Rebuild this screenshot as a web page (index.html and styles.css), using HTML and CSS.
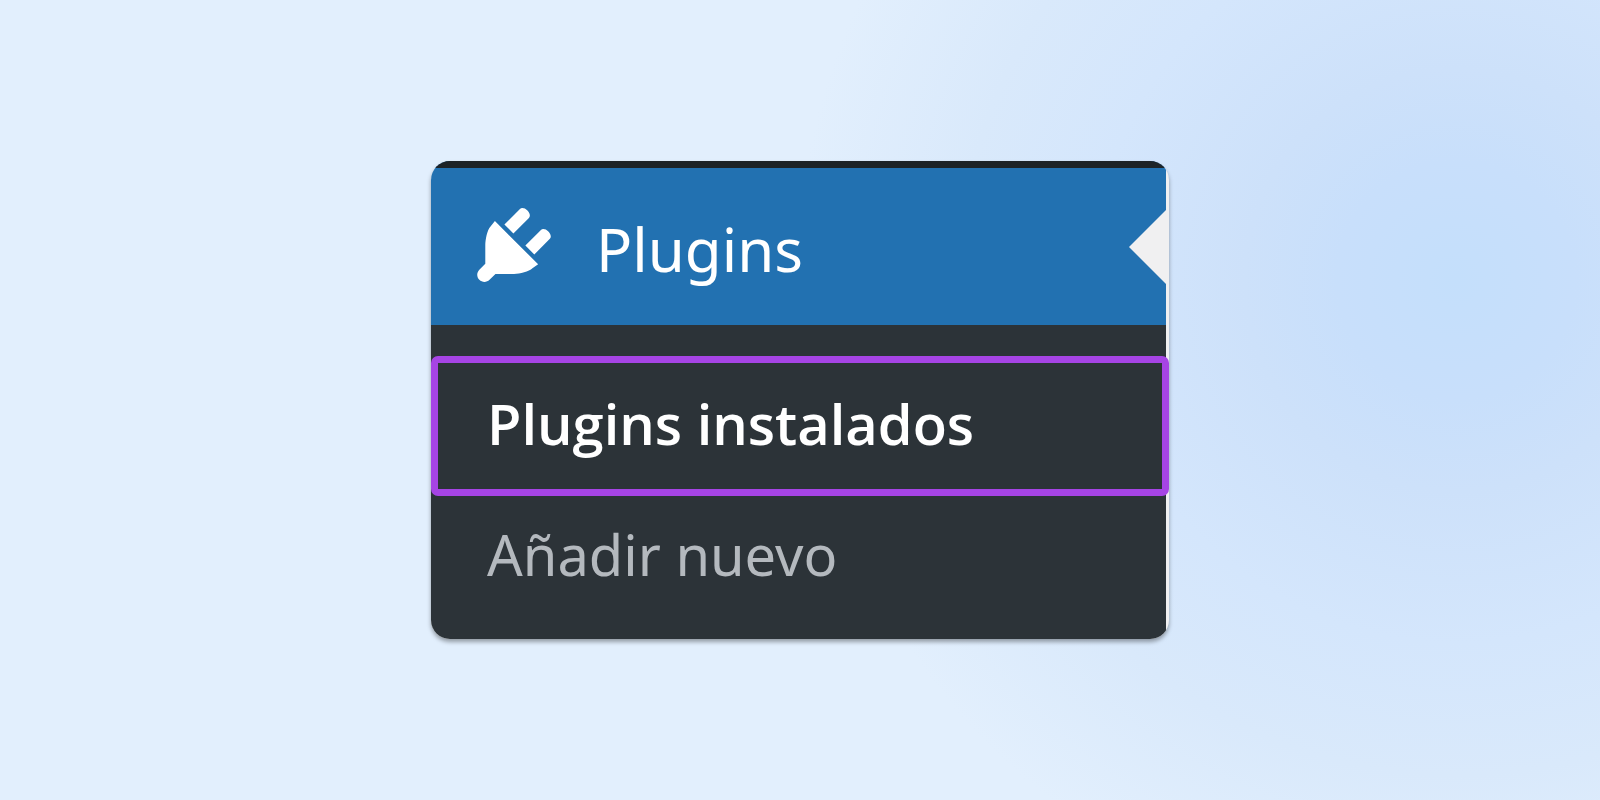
FILE: index.html
```html
<!DOCTYPE html>
<html lang="es">
<head>
    <meta charset="UTF-8">
    <meta name="viewport" content="width=device-width, initial-scale=1.0">
    <title>Plugins</title>
    <link rel="stylesheet" href="styles.css">
</head>
<body>

    <nav class="admin-menu" aria-label="Plugins">
        <a class="menu-top" href="#plugins">
            <svg class="menu-icon" viewBox="0 0 20 20" aria-hidden="true">
                <path d="M13.11 4.36L9.87 7.6 8 5.73l3.24-3.24c.35-.34 1.05-.2 1.56.32.52.51.66 1.21.31 1.55zm-8 1.77l.91-1.12 9.01 9.01-1.19.84c-.71.71-2.63 1.16-3.82 1.16H6.14L4.9 17.26c-.59.59-1.54.59-2.12 0-.59-.58-.59-1.53 0-2.12l1.24-1.24v-3.88c0-1.13.4-3.19 1.09-3.89zm7.26 3.97l3.24-3.24c.34-.35 1.04-.21 1.55.31.52.51.66 1.21.31 1.55l-3.24 3.25z"/>
            </svg>
            <span class="menu-name">Plugins</span>
            <span class="menu-arrow"></span>
        </a>
        <ul class="submenu">
            <li><a class="current" href="#instalados">Plugins instalados</a></li>
            <li><a href="#nuevo">Añadir nuevo</a></li>
        </ul>
    </nav>

</body>
</html>
```

FILE: styles.css
```css
* {
    box-sizing: border-box;
}
body {
    margin: 0;
    min-height: 100vh;
    display: flex;
    align-items: center;
    justify-content: center;
    font-family: "Noto Sans", "Open Sans", sans-serif;
    background: #e2effd radial-gradient(circle 660px at 91% 35%, #c4dffb 0%, #c8dffb 18%, #cde1fa 32%, #d4e6fc 55%, #d9e9fb 75%, #e2effd 100%);
}
.admin-menu {
    width: 92%;
    max-width: 738px;
    padding-right: 3px;
    border-radius: 19px;
    overflow: hidden;
    background-color: #f0f0f1;
    box-shadow: 0 3px 4px rgba(0, 0, 0, 0.35);
}
.menu-top {
    display: flex;
    align-items: center;
    height: 164px;
    padding-left: 35px;
    border-top: 7px solid #1d2327;
    background-color: #2271b1;
    color: #fff;
    font-size: 60px;
    text-decoration: none;
}
.menu-icon {
    width: 96px;
    height: 96px;
    margin-bottom: 4px;
    fill: #fff;
}
.menu-name {
    margin-left: 34px;
    padding-top: 4px;
}
/* notch pointing at the active item */
.menu-arrow {
    margin-left: auto;
    border: 37px solid transparent;
    border-right-color: #f0f0f1;
    border-left: 0;
}
.submenu {
    list-style: none;
    margin: 0;
    padding: 31px 0 20px;
    background-color: #2c3338;
}
.submenu a {
    display: block;
    padding: 15px 56px 21px;
    color: #b4b9be;
    font-size: 56px;
    line-height: 87px;
    text-decoration: none;
}
.submenu .current {
    margin-right: -3px;
    padding: 17px 49px 22px;
    border: 7px solid #a644e5;
    border-radius: 7px;
    background-color: #2c3338;
    color: #fff;
    font-family: "Open Sans", "Noto Sans", sans-serif;
    font-weight: 600;
}
```
